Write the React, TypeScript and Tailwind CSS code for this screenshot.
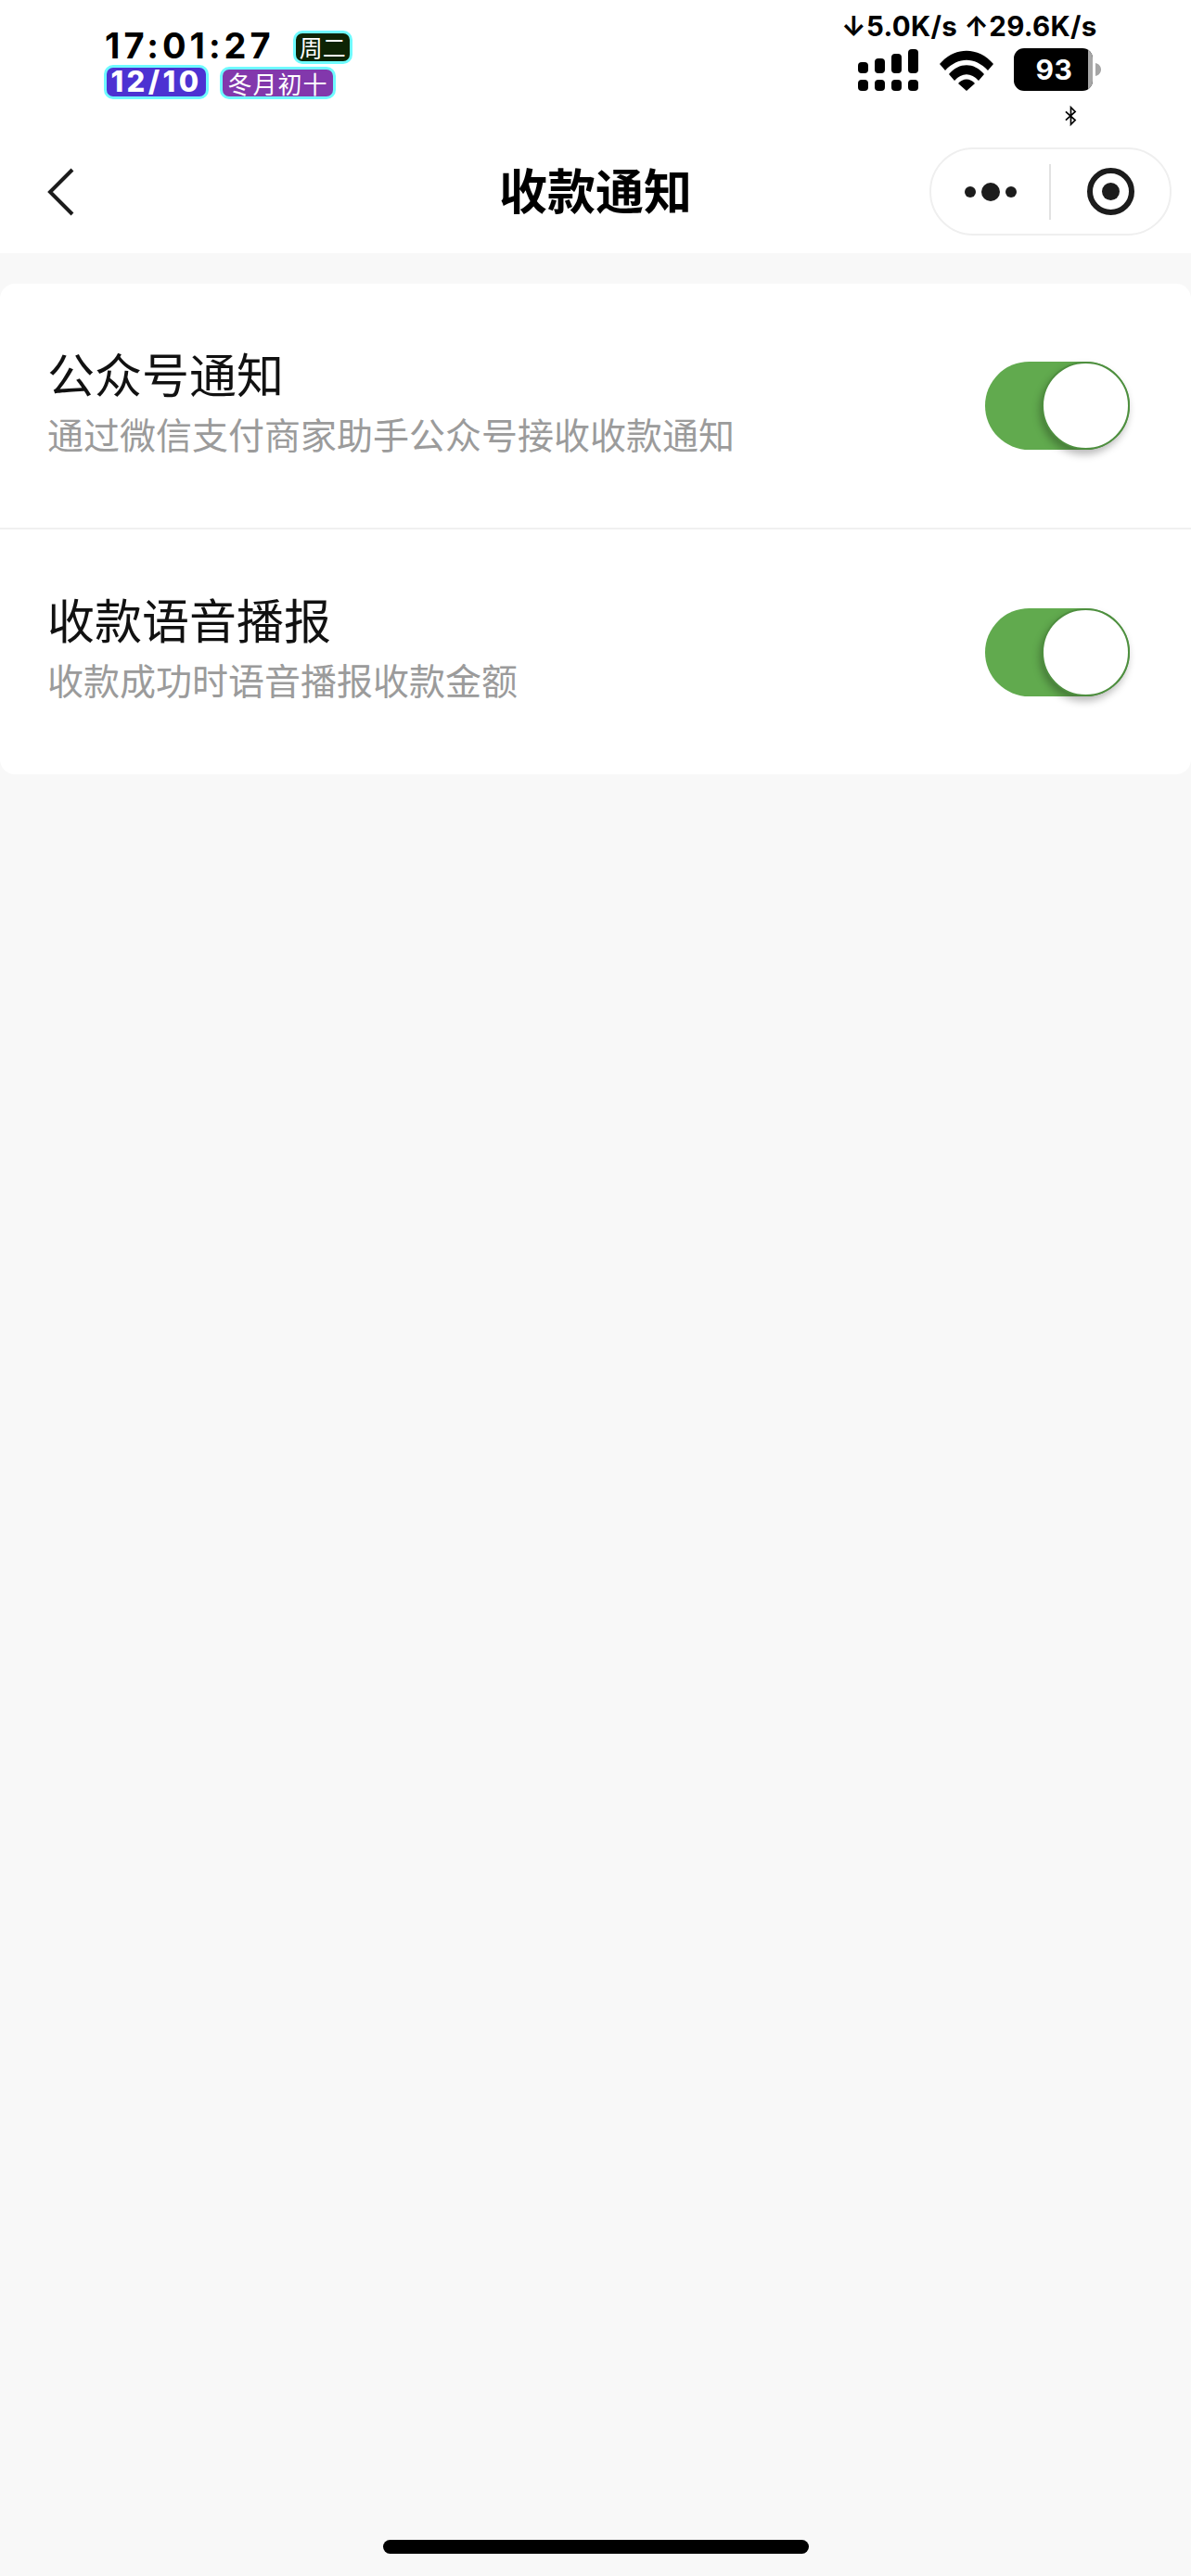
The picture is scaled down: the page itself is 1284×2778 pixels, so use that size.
const SANS = "font-['Inter','Liberation_Sans','Noto_Sans_CJK_SC',sans-serif]";

function CapsuleTag({ text, className }: { text: string; className: string }) {
  return (
    <span
      className={`flex items-center justify-center border-[3px] border-[#6ffbff] rounded-[10px] text-white ${className}`}
    >
      {text}
    </span>
  );
}

function Signal() {
  return (
    <svg width="66" height="46" viewBox="0 0 66 46" fill="#000">
      <rect x="0" y="14" width="11" height="12" rx="4" />
      <rect x="18" y="10" width="11" height="16" rx="4" />
      <rect x="36" y="5" width="11" height="21" rx="4" />
      <rect x="54" y="0" width="11" height="26" rx="4" />
      <rect x="0" y="33" width="11" height="12" rx="4" />
      <rect x="18" y="33" width="11" height="12" rx="4" />
      <rect x="36" y="33" width="11" height="12" rx="4" />
      <rect x="54" y="33" width="11" height="12" rx="4" />
    </svg>
  );
}

function Wifi() {
  return (
    <svg width="58" height="44" viewBox="0 0 58 44" fill="#000">
      <path d="M0 15 C16 -4 42 -4 58 15 L52 22 C38 7 20 7 6 22 Z" />
      <path d="M10 26 C21 13 37 13 48 26 L42 33 C34 24 24 24 16 33 Z" />
      <path d="M20 36 C25 30 33 30 38 36 L29 44 Z" />
    </svg>
  );
}

function Battery() {
  return (
    <div className="flex items-center">
      <div className="relative w-[85px] h-[46px] rounded-[11px] bg-black overflow-hidden flex items-center justify-center">
        <span className={`${SANS} text-white text-[30px] font-bold tracking-[0.5px] leading-none ml-[2px]`}>93</span>
        <div className="absolute right-0 top-0 bottom-0 w-[5px] bg-[#a6a6a6]" />
      </div>
      <svg width="6" height="14" viewBox="0 0 6 14" className="ml-[3px]" fill="#a6a6a6">
        <path d="M0 0 C4 1 6 4 6 7 C6 10 4 13 0 14 Z" />
      </svg>
    </div>
  );
}

function Bluetooth() {
  return (
    <svg width="13" height="24" viewBox="0 0 14 24" fill="none" stroke="#000" strokeWidth="1.8">
      <path d="M1 7 L12 17 L7 22 V2 L12 7 L1 17" />
    </svg>
  );
}

function StatusBar() {
  return (
    <div className="h-[140px] flex justify-between bg-white">
      <div className="pl-[113px] pt-[30px]">
        <div className="flex items-center h-[38px]">
          <span className={`${SANS} text-[38px] font-bold leading-none tracking-[4px] text-black`}>17:01:27</span>
          <CapsuleTag
            text="周二"
            className="ml-[20px] mt-[4px] w-[64px] h-[36px] bg-[#0e2404] text-[25px] font-['Noto_Sans_CJK_SC',sans-serif]"
          />
        </div>
        <div className="flex items-end mt-[2px] -ml-[1px]">
          <CapsuleTag
            text="12/10"
            className={`w-[113px] h-[37px] bg-[#4c32d2] text-[31px] font-extrabold tracking-[3.4px] ${SANS}`}
          />
          <CapsuleTag
            text="冬月初十"
            className="ml-[12px] w-[125px] h-[35px] bg-[#8238ac] text-[26px] tracking-[1px] font-['Noto_Sans_CJK_SC',sans-serif]"
          />
        </div>
      </div>
      <div className="w-[280px] mr-[94px] flex flex-col items-start pt-[10px]">
        <span className={`${SANS} -ml-[3px] text-[29.5px] font-bold leading-[36px] tracking-[0.3px] whitespace-nowrap text-black`}>
          ↓5.0K/s ↑29.6K/s
        </span>
        <div className="flex items-start mt-[7px] ml-[15px]">
          <Signal />
          <div className="ml-[22px] mt-[1px]">
            <Wifi />
          </div>
          <div className="ml-[22px] -mt-[1px]">
            <Battery />
          </div>
        </div>
        <div className="ml-[238px] mt-[14px]">
          <Bluetooth />
        </div>
      </div>
    </div>
  );
}

function Capsule() {
  return (
    <div className="w-[261px] h-[95px] rounded-full border-2 border-[#efefef] bg-white flex items-center">
      <div className="flex-1 flex items-center justify-center gap-[6px]">
        <span className="w-[12px] h-[12px] rounded-full bg-[#1c1c1c]" />
        <span className="w-[20px] h-[20px] rounded-full bg-[#1c1c1c]" />
        <span className="w-[12px] h-[12px] rounded-full bg-[#1c1c1c]" />
      </div>
      <div className="w-[2px] h-[60px] bg-[#e2e2e2]" />
      <div className="w-[128px] flex items-center justify-center">
        <div className="w-[51px] h-[51px] rounded-full border-[6px] border-[#1c1c1c] flex items-center justify-center">
          <span className="w-[19px] h-[19px] rounded-full bg-[#1c1c1c]" />
        </div>
      </div>
    </div>
  );
}

function NavBar() {
  return (
    <div className="relative h-[133px] bg-white flex items-center justify-between pl-[51px] pr-[21px]">
      <svg width="30" height="52" viewBox="0 0 30 52" fill="none" stroke="#1c1c1c" strokeWidth="4">
        <path d="M27 2 L3 26 L27 50" />
      </svg>
      <span className="absolute left-0 right-0 top-[34px] text-center text-[52px] leading-[60px] font-bold text-black font-['Noto_Sans_CJK_SC',sans-serif]">
        收款通知
      </span>
      <Capsule />
    </div>
  );
}

function Toggle() {
  return (
    <div className="relative w-[156px] h-[95px] rounded-full bg-[#61aa4e] shrink-0">
      <div className="absolute right-0 top-0 w-[95px] h-[95px] rounded-full bg-white border-2 border-[#4e8f3f] shadow-[-2px_5px_9px_rgba(0,0,0,0.28)]" />
    </div>
  );
}

function Row({ title, desc, className }: { title: string; desc: string; className: string }) {
  return (
    <div className={`flex items-center justify-between pl-[51px] pr-[66px] ${className}`}>
      <div className="pb-[15px] font-['Noto_Sans_CJK_SC',sans-serif]">
        <div className="text-[51px] leading-[62px] text-[#111]">{title}</div>
        <div className="text-[39px] leading-[46px] text-[#9b9b9b] mt-[11px]">{desc}</div>
      </div>
      <Toggle />
    </div>
  );
}

export default function App() {
  return (
    <div className="relative w-[1284px] h-[2778px] bg-[#f8f8f8] overflow-hidden">
      <div className="bg-white">
        <StatusBar />
        <NavBar />
      </div>
      <div className="mt-[33px] bg-white rounded-[16px]">
        <Row
          title="公众号通知"
          desc="通过微信支付商家助手公众号接收收款通知"
          className="h-[265px] border-b-2 border-[#f0f0f0]"
        />
        <Row title="收款语音播报" desc="收款成功时语音播报收款金额" className="h-[264px]" />
      </div>
      <div className="absolute left-[413px] bottom-[24px] w-[459px] h-[15px] rounded-full bg-black" />
    </div>
  );
}
